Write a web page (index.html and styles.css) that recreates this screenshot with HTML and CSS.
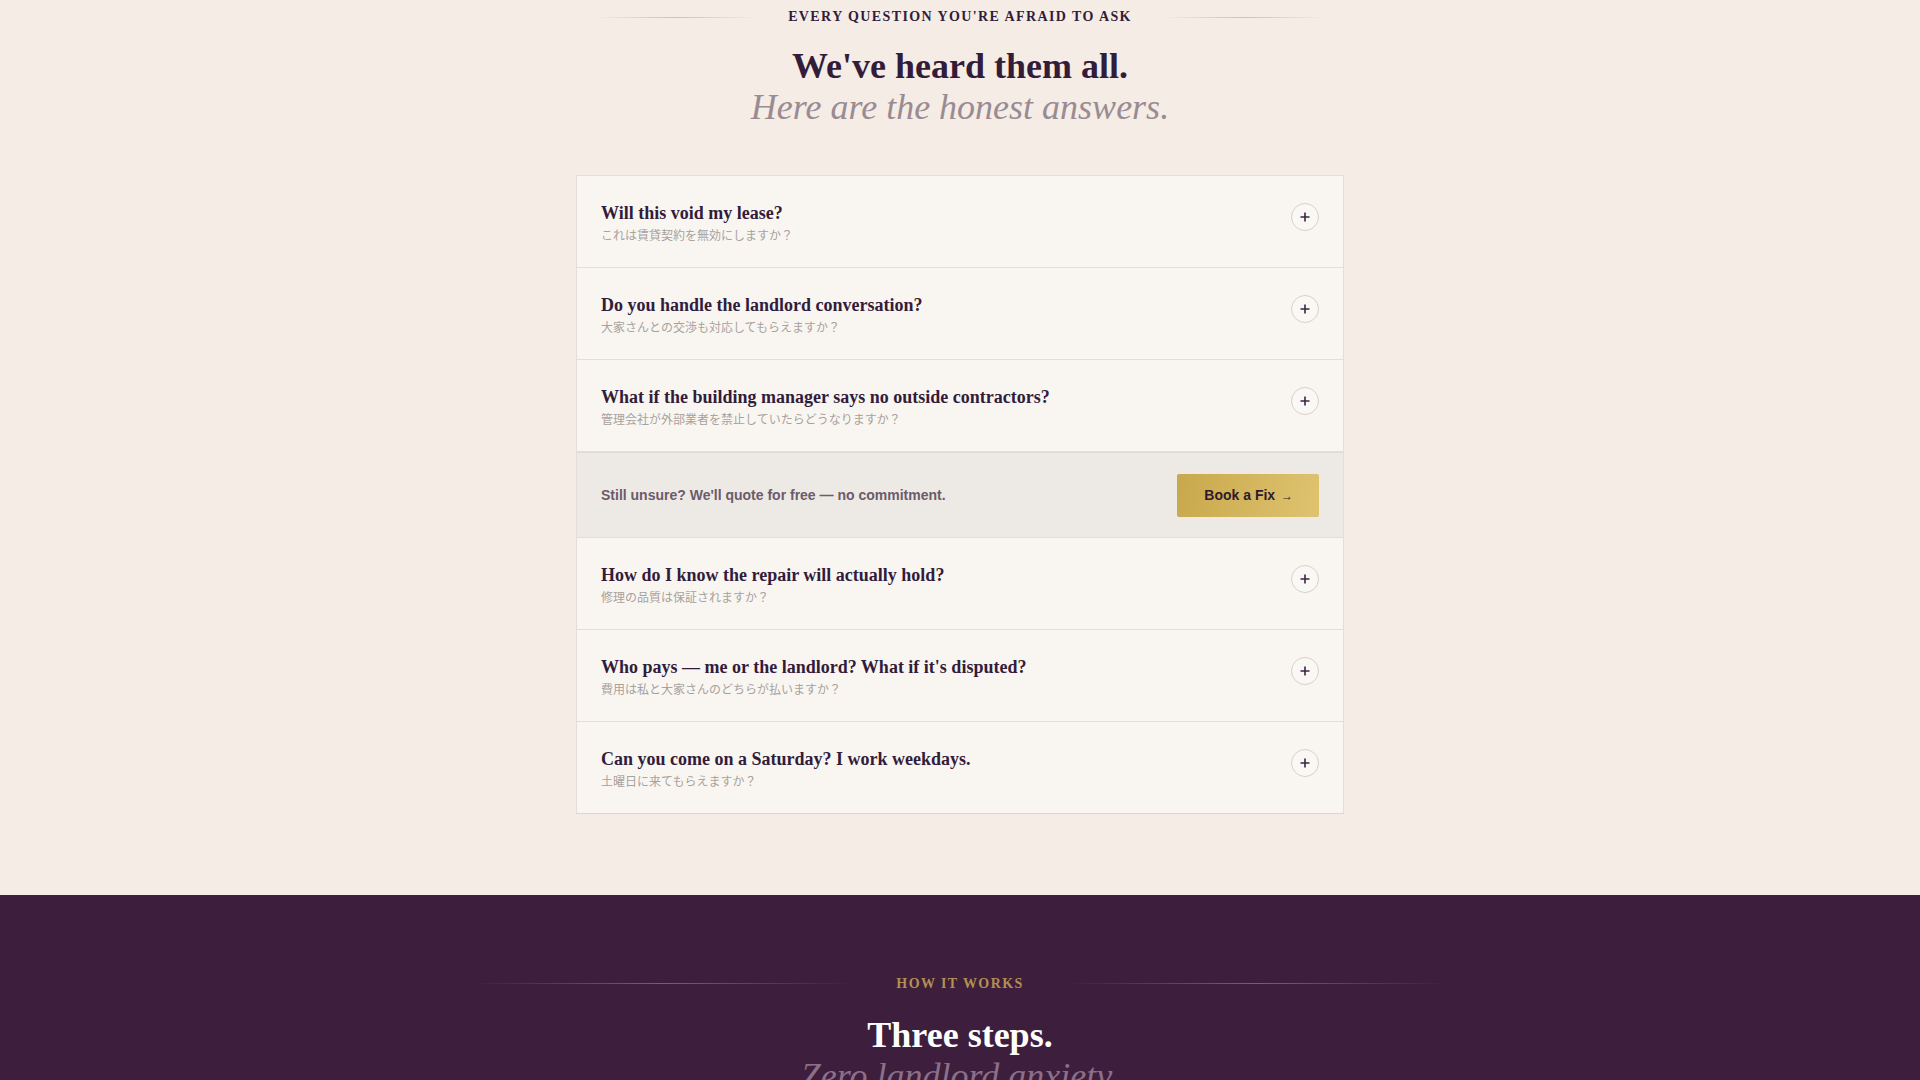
FILE: index.html
```html
<!DOCTYPE html>
<html lang="en">
<head>
    <meta charset="UTF-8">
    <meta name="viewport" content="width=device-width, initial-scale=1.0">
    <title>FAQ - Rental Repairs</title>
    <link rel="stylesheet" href="styles.css">
</head>
<body>
    <section class="faq">
        <div class="eyebrow">
            <span class="eyebrow-line"></span>
            <span class="eyebrow-text">Every question you're afraid to ask</span>
            <span class="eyebrow-line"></span>
        </div>
        <h2 class="title">
            We've heard them all.
            <em>Here are the honest answers.</em>
        </h2>

        <div class="faq-list">
            <div class="faq-item">
                <div class="faq-q">
                    <h3>Will this void my lease?</h3>
                    <p lang="ja">これは賃貸契約を無効にしますか？</p>
                </div>
                <span class="toggle"><svg viewBox="0 0 10 10"><path d="M5 0.5v9M0.5 5h9"/></svg></span>
            </div>
            <div class="faq-item">
                <div class="faq-q">
                    <h3>Do you handle the landlord conversation?</h3>
                    <p lang="ja">大家さんとの交渉も対応してもらえますか？</p>
                </div>
                <span class="toggle"><svg viewBox="0 0 10 10"><path d="M5 0.5v9M0.5 5h9"/></svg></span>
            </div>
            <div class="faq-item">
                <div class="faq-q">
                    <h3>What if the building manager says no outside contractors?</h3>
                    <p lang="ja">管理会社が外部業者を禁止していたらどうなりますか？</p>
                </div>
                <span class="toggle"><svg viewBox="0 0 10 10"><path d="M5 0.5v9M0.5 5h9"/></svg></span>
            </div>

            <div class="faq-cta">
                <p>Still unsure? We'll quote for free — no commitment.</p>
                <a href="#book" class="btn-gold">Book a Fix <span class="arrow">→</span></a>
            </div>

            <div class="faq-item">
                <div class="faq-q">
                    <h3>How do I know the repair will actually hold?</h3>
                    <p lang="ja">修理の品質は保証されますか？</p>
                </div>
                <span class="toggle"><svg viewBox="0 0 10 10"><path d="M5 0.5v9M0.5 5h9"/></svg></span>
            </div>
            <div class="faq-item">
                <div class="faq-q">
                    <h3>Who pays — me or the landlord? What if it's disputed?</h3>
                    <p lang="ja">費用は私と大家さんのどちらが払いますか？</p>
                </div>
                <span class="toggle"><svg viewBox="0 0 10 10"><path d="M5 0.5v9M0.5 5h9"/></svg></span>
            </div>
            <div class="faq-item">
                <div class="faq-q">
                    <h3>Can you come on a Saturday? I work weekdays.</h3>
                    <p lang="ja">土曜日に来てもらえますか？</p>
                </div>
                <span class="toggle"><svg viewBox="0 0 10 10"><path d="M5 0.5v9M0.5 5h9"/></svg></span>
            </div>
        </div>
    </section>

    <section class="how">
        <div class="eyebrow eyebrow-wide">
            <span class="eyebrow-line"></span>
            <span class="eyebrow-text">How it works</span>
            <span class="eyebrow-line"></span>
        </div>
        <h2 class="title">
            Three steps.
            <em>Zero landlord anxiety.</em>
        </h2>
    </section>
</body>
</html>
```

FILE: styles.css
```css
body {
    margin: 0;
    font-family: "Liberation Sans", Arial, "Noto Sans CJK JP", sans-serif;
    background-color: #f4ece5;
    color: #321c39;
}

/* section headers */
.eyebrow {
    display: flex;
    justify-content: center;
    align-items: center;
    gap: 32px;
}

.eyebrow-line {
    width: 160px;
    height: 1px;
    background: linear-gradient(90deg, rgba(214, 196, 140, 0), #d6c48c 50%, rgba(214, 196, 140, 0));
}

.eyebrow-text {
    font-family: "Liberation Serif", "Times New Roman", serif;
    font-size: 14px;
    font-weight: bold;
    line-height: 20px;
    letter-spacing: 0.1em;
    text-transform: uppercase;
}

.title {
    margin: 19px 0 0;
    font-family: "Liberation Serif", "Times New Roman", serif;
    font-size: 36px;
    font-weight: bold;
    line-height: 1.15;
    text-align: center;
}

.title em {
    display: block;
    font-weight: normal;
    color: #9a8b93;
}

/* FAQ */
.faq {
    padding: 7px 0 81px;
}

.faq-list {
    width: 768px;
    margin: 46px auto 0;
    box-sizing: border-box;
    border: 1px solid #e5ded8;
    border-bottom-color: #ddd5cf;
    background-color: #f9f6f1;
}

.faq-item {
    display: flex;
    justify-content: space-between;
    align-items: flex-start;
    padding: 25px 24px 24px;
    border-bottom: 1px solid #e5ded8;
    cursor: pointer;
}

.faq-item:last-child {
    border-bottom: none;
}

.faq-q h3 {
    margin: 0;
    font-family: "Liberation Serif", "Times New Roman", serif;
    font-size: 18px;
    line-height: 24px;
    color: #331c3b;
}

.faq-q p {
    margin: 2px 0 0;
    font-family: "Noto Sans CJK JP", sans-serif;
    font-size: 12px;
    line-height: 16px;
    color: #a8a19d;
}

.toggle {
    display: flex;
    justify-content: center;
    align-items: center;
    width: 26px;
    height: 26px;
    margin-top: 2px;
    border: 1px solid #d8cfcb;
    border-radius: 50%;
    background-color: #faf8f4;
}

.toggle svg {
    width: 10px;
    height: 10px;
    fill: none;
    stroke: #3a2540;
    stroke-width: 1.6;
}

.faq-cta {
    display: flex;
    justify-content: space-between;
    align-items: center;
    padding: 21px 24px 20px;
    background-color: #ede9e5;
    border-top: 1px solid #e0dad5;
    border-bottom: 1px solid #e5ded8;
}

.faq-cta p {
    margin: 0;
    font-size: 14px;
    font-weight: bold;
    color: #6c5b69;
}

.btn-gold {
    display: inline-block;
    padding: 12px 26px 12px 27px;
    border-radius: 2px;
    background: linear-gradient(100deg, #c8a84c, #dfc36f);
    color: #2e1a2c;
    font-size: 14px;
    font-weight: bold;
    line-height: 18px;
    text-decoration: none;
}

.btn-gold .arrow {
    font-size: 12px;
    margin-left: 2px;
}

/* How it works */
.how {
    padding: 79px 0 60px;
    background-color: #3d1f3d;
    color: #fff;
}

.eyebrow-wide {
    gap: 42px;
}

.eyebrow-wide .eyebrow-line {
    width: 382px;
    background: linear-gradient(90deg, rgba(176, 141, 90, 0), rgba(176, 141, 90, 0.6) 50%, rgba(176, 141, 90, 0));
}

.how .eyebrow-text {
    color: #b38f52;
}

.how .title {
    margin-top: 21px;
    color: #fff;
}

.how .title em {
    color: #8c7089;
}
```
